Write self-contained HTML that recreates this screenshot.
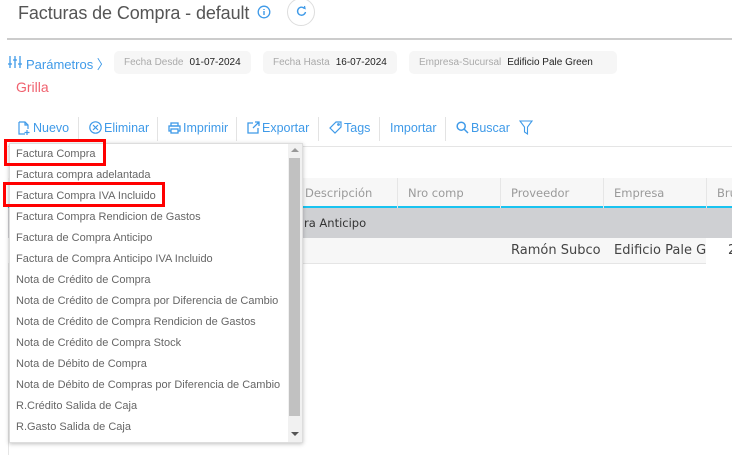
<!DOCTYPE html>
<html><head><meta charset="utf-8"><style>
*{margin:0;padding:0;box-sizing:border-box}
body{width:732px;height:455px;overflow:hidden;background:#fff;font-family:"Liberation Sans",sans-serif;position:relative}
.a{position:absolute;white-space:nowrap}
.blue{color:#3f9ae8}
.chip{position:absolute;top:51px;height:23px;background:#f6f6f6;border-radius:5px;font-size:10px;line-height:23px;padding-left:10px;color:#aaa}
.chip b{font-weight:normal;color:#222;margin-left:6px}
.tb{position:absolute;top:120px;font-size:12.5px;color:#3f9ae8;line-height:16px}
.sep{position:absolute;top:117px;width:1px;height:24px;background:#e3e3e3}
.th{position:absolute;top:178px;height:30px;line-height:30px;font-family:"DejaVu Sans",sans-serif;font-size:11.5px;color:#9a9a9a;border-left:1px solid #e6e6e6;padding-left:10px}
.dd{position:absolute;left:9px;top:143px;width:294px;height:300px;background:#fff;border:1px solid #ddd;box-shadow:0 1px 4px rgba(0,0,0,.25)}
.it{position:absolute;left:6px;font-size:11px;color:#666;line-height:14px}
.red{position:absolute;border:3px solid #f00}
</style></head><body>
<div class="a" style="left:18px;top:2px;font-size:18px;color:#555;line-height:22px;letter-spacing:-0.1px">Facturas de Compra - default</div>
<svg class="a" style="left:257px;top:5px" width="14" height="14" viewBox="0 0 14 14"><circle cx="7" cy="7" r="5.8" fill="none" stroke="#3f9ae8" stroke-width="1.3"/><path d="M7 6v4M7 4v1" stroke="#3f9ae8" stroke-width="1.4"/></svg>
<div class="a" style="left:287px;top:-2px;width:28px;height:28px;border:1px solid #ddd;border-radius:50%"></div>
<svg class="a" style="left:295px;top:5px" width="13" height="13" viewBox="0 0 13 13"><path d="M9.5 3.5A4 4 0 1 0 10.5 7" fill="none" stroke="#3f9ae8" stroke-width="1.4"/><path d="M7.5 2.5L10 3.5 9.5 1" fill="none" stroke="#3f9ae8" stroke-width="1.2"/></svg>
<div class="a" style="left:7px;top:38px;width:725px;height:2px;background:#ccc"></div>
<svg class="a" style="left:8px;top:55px" width="14" height="14" viewBox="0 0 14 14" stroke="#3f9ae8" stroke-width="1.3"><path d="M2 1v12M7 1v12M12 1v12"/><path d="M0 9h4M5 5h4M10 9h4"/></svg>
<div class="a blue" style="left:26px;top:54px;font-size:13px">Parámetros 〉</div>
<div class="chip" style="left:114px;width:137px">Fecha Desde<b>01-07-2024</b></div>
<div class="chip" style="left:263px;width:134px">Fecha Hasta<b>16-07-2024</b></div>
<div class="chip" style="left:409px;width:208px">Empresa-Sucursal<b>Edificio Pale Green</b></div>
<div class="a" style="left:16px;top:79px;font-size:14px;color:#f0616e">Grilla</div>

<svg class="a" style="left:17px;top:121px" width="14" height="14" viewBox="0 0 14 14" fill="none" stroke="#3f9ae8" stroke-width="1.2"><path d="M2 1h6l3 3v4M8 1v3h3M2 1v12h6"/><path d="M10 9v5M7.5 11.5h5"/></svg>
<div class="tb" style="left:33px">Nuevo</div>
<div class="sep" style="left:78px"></div>
<svg class="a" style="left:89px;top:121px" width="13" height="13" viewBox="0 0 13 13" fill="none" stroke="#3f9ae8" stroke-width="1.2"><circle cx="6.5" cy="6.5" r="5.7"/><path d="M4 4l5 5M9 4l-5 5"/></svg>
<div class="tb" style="left:104px">Eliminar</div>
<div class="sep" style="left:157px"></div>
<svg class="a" style="left:168px;top:122px" width="13" height="12" viewBox="0 0 13 12" fill="none" stroke="#3f9ae8" stroke-width="1.3"><rect x="3" y="1" width="7" height="3"/><rect x="1" y="4" width="11" height="5"/><rect x="3" y="7" width="7" height="4" fill="#fff"/></svg>
<div class="tb" style="left:183px">Imprimir</div>
<div class="sep" style="left:236px"></div>
<svg class="a" style="left:247px;top:121px" width="13" height="13" viewBox="0 0 13 13" fill="none" stroke="#3f9ae8" stroke-width="1.3"><path d="M6 2H1v10h10V7M8 1h4v4M12 1L6 7"/></svg>
<div class="tb" style="left:262px">Exportar</div>
<div class="sep" style="left:318px"></div>
<svg class="a" style="left:329px;top:121px" width="13" height="13" viewBox="0 0 13 13" fill="none" stroke="#3f9ae8" stroke-width="1.2"><path d="M7 1h5v5l-6 6-5-5z"/><circle cx="9.5" cy="3.5" r=".8"/></svg>
<div class="tb" style="left:344px">Tags</div>
<div class="sep" style="left:379px"></div>
<div class="tb" style="left:390px">Importar</div>
<div class="sep" style="left:445px"></div>
<svg class="a" style="left:456px;top:121px" width="13" height="13" viewBox="0 0 13 13" fill="none" stroke="#3f9ae8" stroke-width="1.5"><circle cx="5.2" cy="5.2" r="4"/><path d="M8 8l4 4"/></svg>
<div class="tb" style="left:471px">Buscar</div>
<svg class="a" style="left:519px;top:120px" width="14" height="15" viewBox="0 0 14 15" fill="none" stroke="#3f9ae8" stroke-width="1.1"><path d="M1 1h12L8.5 7v7l-3-2V7z"/></svg>
<div class="a" style="left:8px;top:146px;width:724px;height:1px;background:#e5e5e5"></div>

<div class="a" style="left:8px;top:178px;width:724px;height:30px;background:#f7f7f7;border-bottom:2px solid #19c3f0"></div>
<div class="th" style="left:294px;width:103px">Descripción</div>
<div class="th" style="left:397px;width:103px">Nro comp</div>
<div class="th" style="left:500px;width:103px">Proveedor</div>
<div class="th" style="left:603px;width:103px">Empresa</div>
<div class="th" style="left:706px;width:30px">Bruto</div>
<div class="a" style="left:8px;top:208px;width:724px;height:30px;background:#cfd0d3;font-family:'DejaVu Sans',sans-serif;font-size:11.5px;line-height:31px;color:#333;padding-left:296px">ra Anticipo</div>
<div class="a" style="left:8px;top:238px;width:698px;height:26px;background:#f7f7f7;border-bottom:1px solid #e5e5e5"></div>
<div class="a" style="left:511px;top:243px;font-family:'DejaVu Sans',sans-serif;font-size:13px;color:#444">Ramón Subco</div>
<div class="a" style="left:614px;top:243px;width:92px;overflow:hidden;font-family:'DejaVu Sans',sans-serif;font-size:13px;color:#444">Edificio Pale Green</div>
<div class="a" style="left:728px;top:243px;font-family:'DejaVu Sans',sans-serif;font-size:13px;color:#444">2</div>
<div class="a" style="left:8px;top:264px;width:1px;height:191px;background:#e5e5e5"></div>

<div class="dd">
<div class="it" style="top:3px">Factura Compra</div>
<div class="it" style="top:24px">Factura compra adelantada</div>
<div class="it" style="top:45px">Factura Compra IVA Incluido</div>
<div class="it" style="top:66px">Factura Compra Rendicion de Gastos</div>
<div class="it" style="top:87px">Factura de Compra Anticipo</div>
<div class="it" style="top:108px">Factura de Compra Anticipo IVA Incluido</div>
<div class="it" style="top:129px">Nota de Crédito de Compra</div>
<div class="it" style="top:150px">Nota de Crédito de Compra por Diferencia de Cambio</div>
<div class="it" style="top:171px">Nota de Crédito de Compra Rendicion de Gastos</div>
<div class="it" style="top:192px">Nota de Crédito de Compra Stock</div>
<div class="it" style="top:213px">Nota de Débito de Compra</div>
<div class="it" style="top:234px">Nota de Débito de Compras por Diferencia de Cambio</div>
<div class="it" style="top:255px">R.Crédito Salida de Caja</div>
<div class="it" style="top:276px">R.Gasto Salida de Caja</div>
<div class="a" style="left:278px;top:0;width:14px;height:298px;background:#f1f1f1"></div>
<div class="a" style="left:279px;top:14px;width:11px;height:258px;background:#c1c1c1"></div>
<div class="a" style="left:281px;top:4px;width:0;height:0;border-left:4px solid transparent;border-right:4px solid transparent;border-bottom:4px solid #999"></div>
<div class="a" style="left:281px;top:288px;width:0;height:0;border-left:4px solid transparent;border-right:4px solid transparent;border-top:4px solid #555"></div>
</div>
<div class="red" style="left:4px;top:139px;width:102px;height:27px"></div>
<div class="red" style="left:3px;top:182px;width:162px;height:25px"></div>
</body></html>
